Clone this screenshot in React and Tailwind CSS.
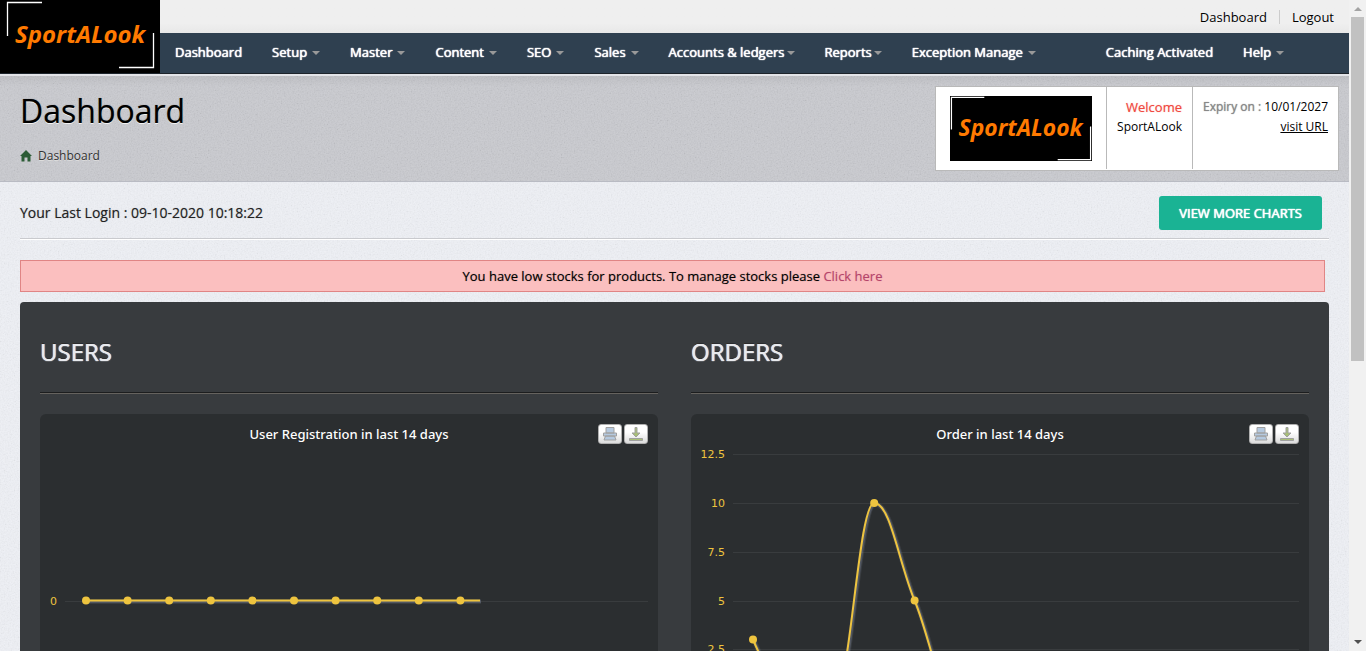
import React from "react";

const BOLDER = "[text-shadow:0_0_1px_currentColor,0_0_1px_currentColor]";

function Logo({ className, viewBox = "0 0 160 73" }) {
  return (
    <svg viewBox={viewBox} preserveAspectRatio="none" className={className} role="img" aria-label="SportALook">
      <rect width="160" height="73" fill="#000" />
      <path d="M7.5 36V2.5H42M153.500 33V67.500H119" fill="none" stroke="#fff" strokeWidth="1.3" />
      <text x="15" y="43" fontSize="24" fontWeight="700" fontStyle="italic" fill="#ff7a00" className="font-['Open_Sans',sans-serif]">
        SportALook
      </text>
    </svg>
  );
}

function Grain({ id, opacity }) {
  return (
    <svg className="pointer-events-none absolute inset-0 h-full w-full" aria-hidden="true">
      <filter id={id} x="0" y="0" width="100%" height="100%">
        <feTurbulence type="fractalNoise" baseFrequency="0.7" numOctaves="2" seed="4" />
        <feColorMatrix type="matrix" values="1.5 0 0 0 -0.25  1.5 0 0 0 -0.25  1.5 0 0 0 -0.25  0 0 0 0 1" />
      </filter>
      <rect width="100%" height="100%" filter={`url(#${id})`} opacity={opacity} />
    </svg>
  );
}

const NAV = [
  { label: "Dashboard" },
  { label: "Setup", caret: "wide" },
  { label: "Master", caret: "wide" },
  { label: "Content", caret: "wide" },
  { label: "SEO", caret: "wide" },
  { label: "Sales", caret: "wide" },
  { label: "Accounts & ledgers", caret: "tight" },
  { label: "Reports", caret: "tight" },
  { label: "Exception Manage", caret: "wide" },
  { label: "" },
  { label: "Caching Activated" },
  { label: "Help", caret: "wide" },
];

function NavItem({ label, caret }) {
  if (!label) return <li className="w-10" aria-hidden="true" />;
  return (
    <li>
      <a href="#" className={`flex h-10 items-center px-[15px] text-[13px] whitespace-nowrap text-white ${BOLDER}`}>
        {label}
        {caret && (
          <span
            className={`h-0 w-0 border-x-4 border-t-4 border-x-transparent border-t-[#999] ${
              caret === "wide" ? "ml-[5px]" : "ml-0.5"
            }`}
          />
        )}
      </a>
    </li>
  );
}

function PrintIcon() {
  return (
    <svg width="14" height="14" viewBox="0 0 14 14" fill="#b5c9df" stroke="#a0a0a0" aria-hidden="true">
      <path d="M3 6V.5H11V6ZM.5 6H13.500V9H.5ZM2.500 9H11.500L13 13H1Z" />
    </svg>
  );
}

function DownloadIcon() {
  return (
    <svg width="14" height="14" viewBox="0 0 14 14" fill="#a8bf77" stroke="#a0a0a0" aria-hidden="true">
      <path d="M6 .5H8V6H11L7 10L3 6H6ZM.5 11.500H13.500V13.500H.5Z" />
    </svg>
  );
}

function ChartButton({ label, children }) {
  return (
    <button
      type="button"
      aria-label={label}
      className="flex h-5 w-6 items-center justify-center rounded-[3px] border border-[#b0b0b0] bg-linear-to-b from-white from-40% to-[#dcdcdc]"
    >
      {children}
    </button>
  );
}

function splinePath(points) {
  const s = 2.5;
  const controls = points.map(([x, y], i) => {
    const prev = points[i - 1];
    const next = points[i + 1];
    if (!prev || !next) return { left: [x, y], right: [x, y] };
    const lx = (1.5 * x + prev[0]) / s;
    const rx = (1.5 * x + next[0]) / s;
    let ly = (1.5 * y + prev[1]) / s;
    let ry = (1.5 * y + next[1]) / s;
    const fix = ((ry - ly) * (rx - x)) / (rx - lx) + y - ry;
    ly += fix;
    ry += fix;
    if ((ly > prev[1] && ly > y) || (ly < prev[1] && ly < y)) {
      ly = ly > y ? Math.max(prev[1], y) : Math.min(prev[1], y);
      ry = 2 * y - ly;
    }
    if ((ry > next[1] && ry > y) || (ry < next[1] && ry < y)) {
      ry = ry > y ? Math.max(next[1], y) : Math.min(next[1], y);
      ly = 2 * y - ry;
    }
    return { left: [lx, ly], right: [rx, ry] };
  });
  return points
    .map((p, i) => (i === 0 ? `M${p}` : `C${controls[i - 1].right} ${controls[i].left} ${p}`))
    .join(" ");
}

function Chart({ title, labels, labelX, gridX, points, tail }) {
  const d = splinePath(tail ? [...points, tail] : points);
  return (
    <figure className="relative rounded-md bg-[#2b2e30]">
      <svg viewBox="0 0 618 400" className="block h-auto w-full font-['Noto_Sans','Open_Sans',sans-serif]" role="img" aria-label={title}>
        <text x="309" y="25" textAnchor="middle" fontSize="13" fontWeight="500" fill="#fff">
          {title}
        </text>
        {labels.map(({ text, y }) => (
          <g key={text}>
            <path d={`M${gridX} ${y}H608`} stroke="#393c3e" />
            <text x={labelX} y={y + 3} textAnchor="end" fontSize="11" fill="#eec43f" className="font-['DejaVu_Sans',sans-serif]">
              {text}
            </text>
          </g>
        ))}
        <g fill="none" transform="translate(1 1)" stroke="#8c93a8">
          <path d={d} strokeWidth="5" opacity="0.15" />
          <path d={d} strokeWidth="3" opacity="0.3" />
        </g>
        <path d={d} fill="none" stroke="#eec43f" strokeWidth="2" />
        {points.map(([x, y]) => (
          <circle key={x} cx={x} cy={y} r="4" fill="#eec43f" />
        ))}
      </svg>
      <div className="absolute top-2.5 right-2.5 flex gap-0.5">
        <ChartButton label="Print the chart">
          <PrintIcon />
        </ChartButton>
        <ChartButton label="Download the chart">
          <DownloadIcon />
        </ChartButton>
      </div>
    </figure>
  );
}

const USER_POINTS = Array.from({ length: 10 }, (_, i) => [46 + i * 41.6, 186.500]);
const ORDER_VALUES = [3, 0, 0, 10, 5, 0, 0];
const ORDER_POINTS = ORDER_VALUES.map((v, i) => [62 + i * 40.4, 284 - v * 19.5]);

function Section({ heading, children }) {
  return (
    <section className="min-w-0 flex-1">
      <h2 className="h-[70px] pt-3 text-2xl leading-9 text-[#e8eaee] [text-shadow:0_0_1px_currentColor,0_0_1px_currentColor,0_-1px_0_#000]">
        {heading}
      </h2>
      <hr className="mb-5 h-0.5 border-t border-b border-t-[#1c1d1e] border-b-[#65625e]" />
      {children}
    </section>
  );
}

export default function App() {
  return (
    <div className="flex h-screen overflow-hidden bg-[#f1f1f1] font-['Open_Sans',sans-serif] text-black">
      <div className="relative isolate min-w-0 flex-1 overflow-hidden bg-[#eef0f5]">
        <div className="absolute inset-0 -z-10">
          <Grain id="grain-page" opacity="0.06" />
        </div>

        <header className="flex border-b border-[#1d242b] bg-[#2f4050]">
          <a href="#" className="shrink-0">
            <Logo className="block h-[73px] w-40" />
          </a>
          <div className="min-w-0 flex-1">
            <div className="flex h-[33px] items-center justify-end bg-linear-to-b from-[#efefef] from-70% to-[#e8e8e8] pr-[15px] text-[13px]">
              <a href="#" className="border-r border-[#ccc] pr-3 leading-[14px]">Dashboard</a>
              <a href="#" className="pl-3 leading-[14px]">Logout</a>
            </div>
            <nav aria-label="Main">
              <ul className="flex">
                {NAV.map((item, i) => (
                  <NavItem key={i} {...item} />
                ))}
              </ul>
            </nav>
          </div>
        </header>

        <div className="relative border-t-2 border-b border-t-[#e3e4e8] border-b-[#b9bbc3] bg-[#c9cacf]">
          <Grain id="grain-head" opacity="0.07" />
          <div className="relative flex h-[105px] justify-between bg-linear-to-b from-black/5 to-transparent to-10% pr-2.5 pl-5">
            <div>
              <h1 className="pt-3 text-[32px] leading-[46px] [text-shadow:0_0_1px_#00000080,0_1px_0_#fff]">Dashboard</h1>
              <a href="#" className="mt-[13px] flex items-center gap-1.5 text-xs leading-[18px] text-[#333] [text-shadow:0_1px_0_#ddd]">
                <svg width="12" height="12" viewBox="0 0 12 12" fill="#2c5c36" aria-hidden="true">
                  <path d="M6 0L12 6H10.500V11.500H7.500V7.500H4.500V11.500H1.500V6H0Z" />
                </svg>
                Dashboard
              </a>
            </div>
            <div className="mt-2.5 flex h-[85px] border border-[#b9b9b9] bg-white text-[13px] leading-5">
              <div className="px-3.5 py-[9px]">
                <Logo viewBox="6 1 149 68" className="block h-[65px] w-[142px]" />
              </div>
              <div className="mb-px border-l border-[#b9b9b9] px-2.5 pt-2.5 text-right text-xs leading-5">
                <p className="text-[13px] text-[#f0483e] [text-shadow:0_0_1px_#f0483e80]">Welcome</p>
                <p>SportALook</p>
              </div>
              <div className="mb-px border-l border-[#b9b9b9] px-2.5 pt-2.5 text-right text-xs leading-5">
                <p>
                  <span className="text-[#888] [text-shadow:0_0_1px_#888888]">Expiry on : </span>10/01/2027
                </p>
                <a href="#" className="underline">visit URL</a>
              </div>
            </div>
          </div>
        </div>

        <main className="pr-5 pl-5">
          <div className="flex h-[57px] items-start justify-between border-b border-[#c9cace] pt-3.5 pr-[7px] text-sm shadow-[0_1px_0_#fff]">
            <p className="leading-[34px] text-[#222] [text-shadow:0_0_1px_#22222266]">Your Last Login : 09-10-2020 10:18:22</p>
            <button type="button" className={`h-[34px] rounded-[3px] bg-[#1ab394] px-5 text-[13px] text-white ${BOLDER}`}>
              VIEW MORE CHARTS
            </button>
          </div>

          <p className="mt-[21px] mr-1 mb-2.5 border border-[#e08585] bg-[#fbbfbf] text-center text-[13px] leading-[30px] [text-shadow:0_0_1px_#00000066]">
            You have low stocks for products. To manage stocks please{" "}
            <a href="#" className="text-[#b5446a] [text-shadow:0_0_1px_#b5446a66]">Click here</a>
          </p>

          <div className="flex gap-[33px] rounded bg-[#383b3e] p-5">
            <Section heading="USERS">
              <Chart
                title="User Registration in last 14 days"
                labels={[{ text: "0", y: 187.500 }]}
                labelX={17}
                gridX={25}
                points={USER_POINTS}
                tail={[440, 186.500]}
              />
            </Section>
            <Section heading="ORDERS">
              <Chart
                title="Order in last 14 days"
                labels={[
                  { text: "12.5", y: 40.5 },
                  { text: "10", y: 89.5 },
                  { text: "7.5", y: 138.5 },
                  { text: "5", y: 187.5 },
                  { text: "2.5", y: 235.5 },
                  { text: "0", y: 284.5 },
                ]}
                labelX={34}
                gridX={42}
                points={ORDER_POINTS}
              />
            </Section>
          </div>
        </main>
      </div>

      <div className="flex w-[17px] shrink-0 flex-col items-center justify-between border-x-2 border-[#f1f1f1] bg-[#f1f1f1]" aria-hidden="true">
        <div className="flex h-[361px] w-full flex-col items-center">
          <span className="mt-[7px] mb-1.5 h-0 w-0 border-x-4 border-b-4 border-x-transparent border-b-[#a3a3a3]" />
          <span className="w-full flex-1 bg-[#c1c1c1]" />
        </div>
        <span className="mb-[7px] h-0 w-0 border-x-4 border-t-4 border-x-transparent border-t-[#505050]" />
      </div>
    </div>
  );
}
